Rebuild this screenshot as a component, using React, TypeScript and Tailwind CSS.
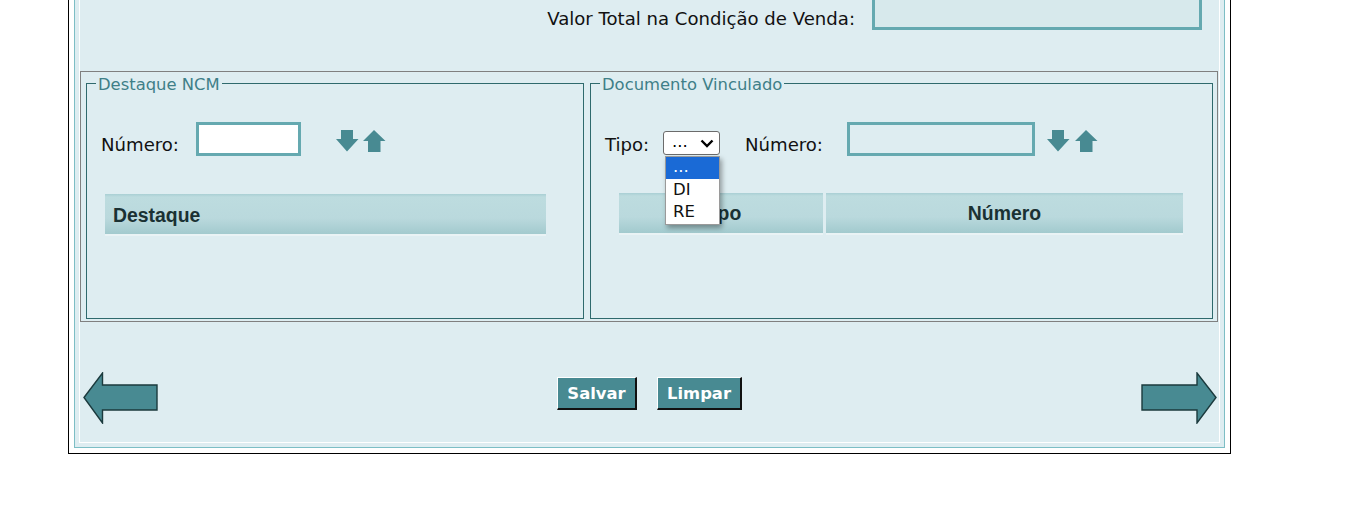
import React from "react";

const BODY = "font-['DejaVu_Sans','Verdana',sans-serif]";

function SmallDown() {
  return (
    <svg width="23" height="22" viewBox="0 0 23 22">
      <polygon points="5,0 17,0 17,9 22.5,9 11,21.5 0,9 5,9" fill="#488a92" />
    </svg>
  );
}
function SmallUp() {
  return (
    <svg width="23" height="22" viewBox="0 0 23 22">
      <polygon points="11,0 22.5,11 17.5,11 17.5,22 5,22 5,11 0,11" fill="#488a92" />
    </svg>
  );
}
function NavLeft() {
  return (
    <svg width="75" height="52" viewBox="0 0 75 52">
      <polygon
        points="1,25.5 19.5,1 19.5,13 74,13 74,38 19.5,38 19.5,51"
        fill="#488a92"
        stroke="#1b3a3d"
        strokeWidth="1.4"
        strokeLinejoin="miter"
      />
    </svg>
  );
}
function NavRight() {
  return (
    <svg width="76" height="52" viewBox="0 0 76 52">
      <polygon
        points="75,25.5 56,1 56,13 1,13 1,38 56,38 56,51"
        fill="#488a92"
        stroke="#1b3a3d"
        strokeWidth="1.4"
        strokeLinejoin="miter"
      />
    </svg>
  );
}

const HEAD =
  "bg-[linear-gradient(to_bottom,#a9cfd4_0px,#bddcdf_3px,#bad9dd_60%,#a2cace_100%)] h-[40px] flex items-center font-['Liberation_Sans','Arial',sans-serif] font-bold text-[19.4px] text-[#1a3133]";

const BTN =
  "h-[33px] pt-[2px] bg-[#488a92] border-t border-l border-white border-r-[2px] border-b-[2px] border-r-[#111] border-b-[#111] text-white font-bold text-[16.4px] leading-[20px] font-['DejaVu_Sans','Verdana',sans-serif]";

export default function App() {
  return (
    <div className={`w-full h-[525px] bg-white overflow-hidden ${BODY}`}>
      <div className="ml-[68px] w-[1163px] mt-[-26px] border border-black bg-white p-[5px]">
        <div className="border border-[#7dbec5] bg-[#deedf1] p-[4px]">
          <div className="border border-white bg-[#deedf1] pt-[10px] pb-[18px]">
            {/* top row */}
            <div className="flex justify-end items-end h-[34px] pr-[17px]">
              <span className="text-[18.1px] leading-[21px] text-[#111] mb-[1px] mr-[17px]">
                Valor Total na Condição de Venda:
              </span>
              <div className="w-[330px] h-[34px] border-[3px] border-[#65a9b0] bg-[#d7e9ec]" />
            </div>

            {/* fieldset wrapper */}
            <div className="mt-[41px] mr-[1px] border border-[#808080] pt-[1px] pb-[2px] pl-[5px] pr-[4px] flex gap-[6px]">
              {/* Destaque NCM */}
              <fieldset className="w-[498px] h-[246px] border border-[#2f6a6d] min-w-0">
                <legend className="ml-[9px] px-[2px] text-[16.4px] leading-[20px] text-[#3f7f88]">
                  <span className="relative top-[2px]">Destaque NCM</span>
                </legend>
                <div className="mt-[29px] h-[34px] flex items-start pl-[14px]">
                  <span className="w-[95px] mt-[12px] text-[18.1px] leading-[21px] text-[#111]">
                    Número:
                  </span>
                  <div className="w-[105px] h-[34px] border-[3px] border-[#65a9b0] bg-white" />
                  <div className="ml-[35px] mt-[8px] flex gap-[4px]">
                    <SmallDown />
                    <SmallUp />
                  </div>
                </div>
                <div className="mt-[38px] ml-[18px] w-[441px]">
                  <div className={`${HEAD} pl-[8px] pt-[3px]`}>Destaque</div>
                  <div className="h-[2px] bg-[#e9f3f5]" />
                </div>
              </fieldset>

              {/* Documento Vinculado */}
              <fieldset className="w-[623px] h-[246px] border border-[#2f6a6d] min-w-0">
                <legend className="ml-[9px] px-[2px] text-[16.4px] leading-[20px] text-[#3f7f88]">
                  <span className="relative top-[2px]">Documento Vinculado</span>
                </legend>
                <div className="mt-[29px] h-[34px] flex items-start pl-[14px]">
                  <span className="w-[58px] mt-[12px] text-[18.1px] leading-[21px] text-[#111]">
                    Tipo:
                  </span>
                  <div className="relative mt-[9px]">
                    <div className="w-[57px] h-[24px] border border-[#6b6b6b] rounded-[3px] bg-white flex items-center pl-[8px] pr-[5px] justify-between">
                      <span className="text-[16.5px] leading-[20px] text-black -mt-[2px]">...</span>
                      <svg width="14" height="9" viewBox="0 0 14 9">
                        <polyline
                          points="1.5,1.5 7,7 12.5,1.5"
                          fill="none"
                          stroke="#000"
                          strokeWidth="2.4"
                        />
                      </svg>
                    </div>
                    <div className="absolute left-[2px] top-[25px] w-[55px] h-[69px] bg-white border border-[#9a9a9a] shadow-[2px_3px_5px_rgba(0,0,0,0.35)] z-10 text-[16.5px] leading-[22px]">
                      <div className="h-[22px] bg-[#1a6ad6] text-white pl-[7px] leading-[20px]">...</div>
                      <div className="h-[22px] text-[#111] pl-[7px]">DI</div>
                      <div className="h-[22px] text-[#111] pl-[7px]">RE</div>
                    </div>
                  </div>
                  <span className="ml-[25px] w-[102px] mt-[12px] text-[18.1px] leading-[21px] text-[#111]">
                    Número:
                  </span>
                  <div className="w-[188px] h-[34px] border-[3px] border-[#65a9b0] bg-[#deedf1]" />
                  <div className="ml-[12px] mt-[8px] flex gap-[5px]">
                    <SmallDown />
                    <SmallUp />
                  </div>
                </div>
                <div className="mt-[37px] ml-[28px] flex gap-[3px]">
                  <div className="w-[204px]">
                    <div className={`${HEAD} justify-center pt-[2px]`}>Tipo</div>
                    <div className="h-[2px] bg-[#e9f3f5]" />
                  </div>
                  <div className="w-[357px]">
                    <div className={`${HEAD} justify-center pt-[2px]`}>Número</div>
                    <div className="h-[2px] bg-[#e9f3f5]" />
                  </div>
                </div>
              </fieldset>
            </div>

            {/* bottom row */}
            <div className="mt-[50px] h-[52px] flex items-start justify-between pl-[3px] pr-[2px]">
              <NavLeft />
              <div className="mt-[5px] flex gap-[20px]">
                <button className={`${BTN} w-[80px]`}>Salvar</button>
                <button className={`${BTN} w-[85px]`}>Limpar</button>
              </div>
              <NavRight />
            </div>
          </div>
        </div>
      </div>
    </div>
  );
}
